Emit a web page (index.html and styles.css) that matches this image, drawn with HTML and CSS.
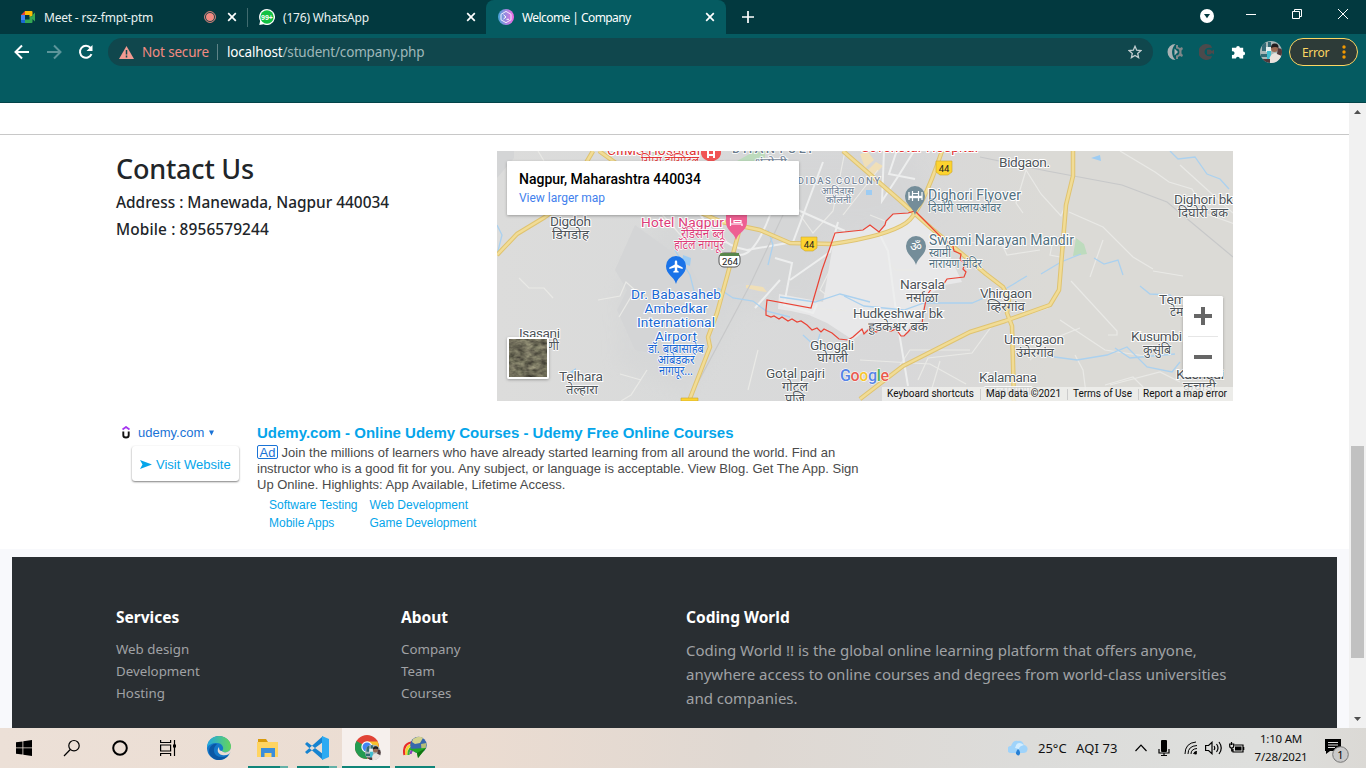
FILE: index.html
```html
<!DOCTYPE html>
<html lang="en">
<head>
<meta charset="utf-8">
<title>Welcome | Company</title>
<link rel="stylesheet" href="styles.css">
</head>
<body>
<div class="screen">
<header class="tabstrip">
  <div class="tab">
    <svg class="fav" viewBox="0 0 16 16"><path d="M1 6l4-4v4z" fill="#ea4335"/><path d="M5 2h6.500q1 0 1 1v4l-3 1V6H5z" fill="#fbbc04"/><path d="M1 6h4v5H1z" fill="#4285f4"/><path d="M1 11h4v3H2q-1 0-1-1z" fill="#1967d2"/><path d="M5 10.500h4.500V8l3-1v6q0 1-1 1H5zM12.500 6L15 3.500v9L12.500 10z" fill="#34a853"/></svg>
    <span class="tab-title">Meet - rsz-fmpt-ptm</span>
    <svg class="rec" viewBox="0 0 12 12"><circle cx="6" cy="6" r="5.400" fill="none" stroke="#e98a82"/><circle cx="6" cy="6" r="4" fill="#f28b82"/></svg>
    <svg class="x" viewBox="0 0 10 10"><path d="M1.200 1.200l7.600 7.600M8.800 1.200L1.200 8.800"/></svg>
  </div>
  <div class="tab sep">
    <svg class="fav" viewBox="0 0 16 16"><path d="M8 0a8 8 0 1 1-3.500 15.200L.3 16l.8-4A8 8 0 0 1 8 0z" fill="#fff"/><circle cx="8" cy="8" r="6.700" fill="#12c143"/><text x="8" y="10.500" class="badge99">99+</text></svg>
    <span class="tab-title">(176) WhatsApp</span>
    <svg class="x" viewBox="0 0 10 10"><path d="M1.200 1.200l7.600 7.600M8.800 1.200L1.200 8.800"/></svg>
  </div>
  <div class="tab active">
    <svg class="fav" viewBox="0 0 16 16"><defs><linearGradient id="fg"><stop stop-color="#47a4d8"/><stop offset="1" stop-color="#f36be4"/></linearGradient></defs><circle cx="8" cy="8" r="8" fill="url(#fg)"/><path d="M8 2.400l5 2.900v5.500l-5 2.900-5-2.900V5.300z" fill="none" stroke="#f3eaff"/><path d="M5.500 5.800L8 8l-2.500 2M8.500 10.300H11" fill="none" stroke="#fff"/></svg>
    <span class="tab-title tight">Welcome | Company</span>
    <svg class="x" viewBox="0 0 10 10"><path d="M1.200 1.200l7.600 7.600M8.800 1.200L1.200 8.800"/></svg>
  </div>
  <svg class="plus" viewBox="0 0 12 12"><path d="M6 0v12M0 6h12"/></svg>
  <div class="winbtns">
    <svg width="14" height="14" viewBox="0 0 14 14"><circle cx="7" cy="7" r="7" fill="#fff"/><path d="M4 5h6L7 9.300z" fill="#02393f"/></svg>
    <svg width="10" height="10" viewBox="0 0 10 10"><path d="M0 4.500h10"/></svg>
    <svg width="10" height="10" viewBox="0 0 10 10"><path d="M.5 2.500h7v7h-7zM2.500 2.500v-2h7v7h-2"/></svg>
    <svg width="10" height="10" viewBox="0 0 10 10"><path d="M0 0l10 10M10 0L0 10"/></svg>
  </div>
</header>
<div class="toolbar">
  <div class="addr-row">
    <svg class="nav" viewBox="0 0 16 16"><path d="M15 8H2M8 1.500L1.500 8 8 14.500"/></svg>
    <svg class="nav dim" viewBox="0 0 16 16"><path d="M1 8h13M8 1.500L14.500 8 8 14.500"/></svg>
    <svg class="nav" viewBox="0 0 16 16"><path d="M13.500 10.200A6 6 0 1 1 12.600 4"/><path d="M14.500 1v6H8.500z" fill="#fff" stroke="none"/></svg>
    <div class="omni">
      <svg class="warn" viewBox="0 0 15 13"><path d="M7.500 0L15 13H0z" fill="#f29a91"/><path d="M7.500 4v4.500M7.500 9.500v2" stroke="#10474d" stroke-width="1.500"/></svg>
      <span class="notsec">Not secure</span><i class="bar"></i>
      <span class="url"><b>localhost</b>/student/company.php</span>
      <svg class="star" viewBox="0 0 14 14"><path d="M7 1.300l1.700 3.900 4.100.4-3.100 2.800.9 4.200L7 10.400l-3.600 2.200.9-4.200L1.200 5.600l4.100-.4z" fill="none" stroke="#c3ced0" stroke-width="1.300"/></svg>
    </div>
    <svg class="ext" viewBox="0 0 16 16"><path d="M8.500 0A8 8 0 1 0 8.500 16C4 12 4 4 8.500 0z" fill="#a9b2b4"/><path d="M9 1h2v2l2 1 2-1 1 2-1.500 1.500v3L16 11l-1 2-2-1-2 1v2H9z" fill="#7e8789"/><circle cx="9" cy="8" r="3.400" fill="#075c62"/><path d="M7.500 4.500L11 8l-3.500 3.500z" fill="#aeb6b8"/></svg>
    <svg class="ext e2" viewBox="0 0 16 16"><path d="M12 1.500A8 8 0 1 0 12 14.500L13 12Q6 13 5.500 8 6 3 13 4z" fill="#4b4a4c"/><path d="M8 5.500h3l2 1.500 2-1.500v5L13 9l-2 1.500H8z" fill="#4b4a4c"/></svg>
    <svg class="ext e3" viewBox="0 0 16 16"><path d="M1 3.500h4.500a2 2 0 1 1 4 0H13v4a2 2 0 1 1 0 4V15H9.300a2 2 0 1 0-4 0H1v-4a2 2 0 1 0 0-3.700z" fill="#fff"/></svg>
    <svg class="face" viewBox="0 0 22 22"><use href="#portrait"/></svg>
    <div class="error"><span>Error</span><svg width="4" height="14" viewBox="0 0 4 14"><g fill="#f29900"><circle cx="2" cy="2" r="1.700"/><circle cx="2" cy="7" r="1.700"/><circle cx="2" cy="12" r="1.700"/></g></svg></div>
  </div>
</div>
<div class="viewport">
<main class="page">
  <div class="rule"></div>
  <section class="contact">
    <div class="info">
      <h2>Contact Us</h2>
      <p>Address : Manewada, Nagpur 440034</p>
      <p class="wider">Mobile : 8956579244</p>
    </div>
    <svg class="map" viewBox="497 151 736 250">
      <defs>
        <linearGradient id="mg"><stop stop-color="#dcdcdb"/><stop offset=".25" stop-color="#d9dada"/><stop offset=".55" stop-color="#d8d8d9"/><stop offset=".75" stop-color="#dbdad6"/></linearGradient>
        <filter id="sh" x="-20%" y="-20%" width="140%" height="160%"><feDropShadow dx="0" dy="1" stdDeviation="1.500" flood-opacity=".3"/></filter>
        <filter id="soft"><feGaussianBlur stdDeviation="9"/></filter>
        <filter id="grain" x="0" y="0" width="1" height="1" color-interpolation-filters="sRGB"><feTurbulence type="fractalNoise" baseFrequency=".12 .2" numOctaves="3" seed="5"/><feColorMatrix values=".5 .3 0 0 .03  .5 .28 0 0 .03  .4 .25 0 0 .02  0 0 0 0 1"/></filter>
      </defs>
      <rect x="497" y="151" width="736" height="250" fill="url(#mg)"/>
      <path d="M620 285l45-70 80-64h165l30 60-70 20-35 0-18 78-75-5-55 90-70-30z" fill="#cfd0d2" opacity=".3" filter="url(#soft)"/>
      <path d="M497 151h17v7l-17 20zM635 225l55 40 20 40-20 55-55-10-18-40 10-20-12-20z" fill="#d4d5d6"/>
      <path d="M650 151h20l-12 6zM737 161l18-10h10v10zM1076 238l8 6 3 10-14 2z" fill="#bddbbd"/>
      <path d="M1091 158l9-3 1 6zM866 190h6v5h-6zM683 255l8 3-1 8-8-3zM570 372l6-4-1 6z" fill="#9dccf3"/>
      <path d="M746 285l4 0 13 2 4 5-8-1-13-3zM860 154l8-2 6 8-9 8zM868 170l8-8 7 4-9 9z" fill="#f0dfb7"/>
      <path d="M835 233l28-3 7-5 9 7 14-18 22-1 25 23 15 31 7 15-17 3-20 12-4 23-10 5-8 12-8-11-24 0-18 14-26-17-18-8-18-4-13-2 1-15 44 8z" fill="#e8e8e9"/>
      <g class="small">
        <path d="M538 151l6 10M519 278l10 10h15l9 10M598 300l22-4 6-14 9 8-16 27M647 370l-16 25-10 6M620 374l21 6M758 350l-10 40M660 212l25 28M800 300l22 9 25 2M830 270l-10 20 13 10M843 215l35-45M800 215l13 18 20-22 12-60M860 360l70 4 36 20"/>
        <path d="M1026 170l-10 33 7 10M1026 170l15 24 20 22 8-20M1000 240l7 15 33-5M1069 212l34 15 30 30 20 12M1103 240l-13 37M1054 235l-4 20 10 2M1153 271l30 5M1071 281l46 50v4h-9M1030 360l20-20 30-12M1060 320l45 30 40 6M918 380l10-22 44-5 22-30 32-8 22-7M1120 151l35 21 14 10 23 7 15 25 28 10M1075 355l8 15 4 31M1105 385l28-8 10 10M1180 165l53 48M930 395l10-34"/>
        <path d="M870 215l50 20 70 10M886 260l10 10 20 0M900 365l10-15 60 0M1110 385l50-13 20 10"/>
      </g>
      <g class="white"><path d="M695 205q20 40 52 45l46-8 30-80M770 215q-15 40-30 40M775 258l17 5-8 42 29 8 4-9M880 235l8 16 10 75 10 60M884 151l-2 50 17-26 15-24M700 151l50 35 50 25 45 20M780 280l-25 28M838 222l-8 30-40 28M897 150l-8 24 26 5"/></g>
      <path class="rail" d="M783 215l-33 70-62 116M980 157l67 14 75 14 45 17 66 55"/>
      <g class="water"><path d="M497 225l5 10-5 20M718 288l15 10 20 3 13 10 24 6M780 297l35 5 25-8 30 8M844 296l20 10 40 4 20-7 48 0 35-15 20-12M675 250l15 25 5 20M768 230l5 15-5 20M1170 151l8 8 17-2 12 17 13 5 9 10M1041 274l20-12 20-8M1094 258l10 6 14-4 5 15M1140 286l10 8 20 1 10 10M1047 356l30 4 30-5 20-8 20 20 25 5 8-10M1115 348l15 10 45-4M803 335l13 12 4-13"/></g>
      <g class="casing"><path id="roadw" d="M497 255l20-21 28-17 18-12 10-20 20-34M599 151l63 45 60 26 38 8 30 13 42 1q55-8 74-21 15-10 36-72M742 220l-14 53-11 40-9 24 2 10-21 54M843 151l53 46 35 31 55 46 17 13 6 12-2 14 5 13 2 75M1073 151v25l-7 29-7 85-9 15-45 16-35 11-67 34-43 33"/></g>
      <use href="#roadw" class="road"/>
      <path class="bound" d="M822 270l13-37 28-3 7-5 9 7 6-7 1-4 7-7 15-1 7-2 25 25 13 10 1 5 7 3-1 6 5 3-2 6 3 3-2 5-17 2-4 6-8-1-8 11-4 20-1 10-8 0-6 7-4 4-3 0-5-7-5 2-8-2-7 3-7-3-5 5-2-5-9 8-5 3-9-1-7-6-8-4-3 3-4-4-5 2-5-5-6-4-4 1-5-3-4 2-6-4-3 2-5-3-3 1-5-2 0-5 1-10 44 8z"/>
      <g class="shield"><path d="M936 161h16v11l-4 3h-8l-4-3zM801 237h16v11l-4 3h-8l-4-3z"/><path d="M681 401v-3h17v3z"/></g>
      <rect x="719" y="253" width="21" height="14" rx="5" fill="#fff" stroke="#555"/><path d="M720 256v-3h19v3z" fill="#58864b"/>
      <g class="num"><text x="944" y="172">44</text><text x="809" y="248">44</text><text x="730" y="265">264</text></g>
      <g class="dark">
        <text x="999" y="167" textLength="51">Bidgaon.</text><text x="1174" y="204" textLength="59">Dighori bk</text><text class="hi" x="1178" y="217" textLength="50" lengthAdjust="spacingAndGlyphs">दिघोरी बक</text>
        <text x="550" y="226" textLength="41">Digdoh</text><text class="hi" x="552" y="239" textLength="37" lengthAdjust="spacingAndGlyphs">डिगडोह</text>
        <text x="519" y="338" textLength="41">Isasani</text><text class="hi" x="547" y="350">णी</text>
        <text x="559" y="381" textLength="44">Telhara</text><text class="hi" x="566" y="394" textLength="32" lengthAdjust="spacingAndGlyphs">तेल्हारा</text>
        <text x="900" y="289" textLength="45">Narsala</text><text class="hi" x="906" y="302" textLength="32" lengthAdjust="spacingAndGlyphs">नर्साळा</text>
        <text x="853" y="318" textLength="90">Hudkeshwar bk</text><text class="hi" x="868" y="331" textLength="60" lengthAdjust="spacingAndGlyphs">हुडकेश्वर बक</text>
        <text x="980" y="298" textLength="52">Vhirgaon</text><text class="hi" x="987" y="311" textLength="38" lengthAdjust="spacingAndGlyphs">व्हिरगांव</text>
        <text x="1004" y="344" textLength="60">Umergaon</text><text class="hi" x="1016" y="357" textLength="38" lengthAdjust="spacingAndGlyphs">उंमेरगांव</text>
        <text x="1159" y="304">Temsana</text><text class="hi" x="1170" y="316">टेमसना</text>
        <text x="1131" y="341" textLength="51">Kusumbi</text><text class="hi" x="1143" y="354" textLength="28" lengthAdjust="spacingAndGlyphs">कुसुंबि</text>
        <text x="810" y="350" textLength="44">Ghogali</text><text class="hi" x="817" y="362" textLength="31" lengthAdjust="spacingAndGlyphs">घोगली</text>
        <text x="766" y="378" textLength="59">Gotal pajri</text><text class="hi" x="782" y="391" textLength="26" lengthAdjust="spacingAndGlyphs">गोटल</text><text class="hi" x="785" y="403" textLength="20" lengthAdjust="spacingAndGlyphs">पजि</text>
        <text x="979" y="382" textLength="58">Kalamana</text><text class="hi" x="985" y="395" textLength="46" lengthAdjust="spacingAndGlyphs">काळामाणा</text>
        <text x="1176" y="379" textLength="48">Kachadi</text><text class="hi" x="1183" y="391" textLength="33" lengthAdjust="spacingAndGlyphs">कुचाडी</text>
      </g>
      <g class="blue"><text x="676" y="299" textLength="90">Dr. Babasaheb</text><text x="676" y="313" textLength="63">Ambedkar</text><text x="676" y="327" textLength="78">International</text><text x="676" y="341" textLength="42">Airport</text><text class="hi" x="676" y="353" textLength="56" lengthAdjust="spacingAndGlyphs">डॉ. बाबासाहेब</text><text class="hi" x="676" y="364" textLength="37" lengthAdjust="spacingAndGlyphs">आंबेडकर</text><text class="hi" x="676" y="375" textLength="34" lengthAdjust="spacingAndGlyphs">नागपूर...</text></g>
      <g class="pink"><text x="724" y="227" textLength="83">Hotel Nagpur</text><text class="hi" x="724" y="238" textLength="43" lengthAdjust="spacingAndGlyphs">रॅडिसन ब्लू</text><text class="hi" x="724" y="249" textLength="50" lengthAdjust="spacingAndGlyphs">हॉटेल नागपूर</text></g>
      <g class="red"><text x="607" y="155" textLength="93">CIIMS Hospital</text><text class="hi" x="641" y="165" textLength="58" lengthAdjust="spacingAndGlyphs">सिम्स हॉस्पिटल</text><text x="861" y="152" textLength="117">Sevenstar Hospital</text></g>
      <g class="slate"><text x="928" y="200" textLength="93">Dighori Flyover</text><text class="hi" x="928" y="212" textLength="73" lengthAdjust="spacingAndGlyphs">दिघोरी फ्लायओवर</text><text x="929" y="245" textLength="145">Swami Narayan Mandir</text><text class="hi" x="929" y="257" textLength="22" lengthAdjust="spacingAndGlyphs">स्वामी</text><text class="hi" x="929" y="268" textLength="53" lengthAdjust="spacingAndGlyphs">नारायण मंदिर</text></g>
      <g class="area"><text x="732" y="153" textLength="80" class="big">DHANTOLI</text><text x="755" y="165" textLength="32" class="hi" lengthAdjust="spacingAndGlyphs">धंतोली</text><text x="790" y="184" textLength="90">ADIDAS COLONY</text><text x="821" y="194" textLength="33" class="hi" lengthAdjust="spacingAndGlyphs">आदिदास</text><text x="826" y="203" textLength="25" class="hi" lengthAdjust="spacingAndGlyphs">कॉलनी</text></g>
      <path d="M676 284c-2-8-10-9-10-18a10 10 0 0 1 20 0c0 9-8 10-10 18z" fill="#1a73e8"/><path d="M676 260l1.200 1.500v3l5.500 3v1.500l-5.500-1.500v3l1.500 1v1h-5.400v-1l1.500-1v-3l-5.500 1.500v-1.500l5.500-3v-3z" fill="#fff"/>
      <path d="M736 240c-2-8-10-9-10-18v-7h21v7c0 9-9 10-11 18z" fill="#ee5f92"/><path d="M730.500 218v8M730.500 224h11.500v2M734 220.500h7v2h-7z" fill="none" stroke="#fff" stroke-width="1.200"/>
      <path d="M701 151h20q1 7-7 10h-6q-8-3-7-10z" fill="#f05454"/><path d="M708 151v7M714 151v7M708 155h6" stroke="#fff" stroke-width="2"/>
      <g fill="#748d99"><path d="M915 215c-2-8-10-10-10-19a10 10 0 0 1 20 0c0 9-8 11-10 19zM916 265c-2-8-10-10-10-19a10 10 0 0 1 20 0c0 9-8 11-10 19z"/></g>
      <path d="M909 197h13" stroke="#fff" stroke-width="2.400"/><path d="M912.500 191v10M918.500 191v10M909 192v8M922 192v8M912 193.500h7" fill="none" stroke="#fff" stroke-width="1.200"/><text x="916" y="251" class="om">ॐ</text>
      <g class="google"><text x="840" y="381" textLength="49"><tspan fill="#5684e6">G</tspan><tspan fill="#e95a50">o</tspan><tspan fill="#f7c52f">o</tspan><tspan fill="#5684e6">g</tspan><tspan fill="#4caf61">l</tspan><tspan fill="#e95a50">e</tspan></text></g>
      <rect x="507" y="161" width="292" height="54" rx="1" fill="#fff" filter="url(#sh)"/>
      <text class="place" x="519" y="184" textLength="182">Nagpur, Maharashtra 440034</text><text class="larger" x="519" y="202" textLength="86">View larger map</text>
      <rect x="507" y="337" width="42" height="42" rx="2" fill="#fff" filter="url(#sh)"/><rect x="509" y="339" width="38" height="38" filter="url(#grain)"/>
      <path d="M882 387h351v14H882z" fill="#f0f0ee" opacity=".8"/><path d="M980.500 389v11M1067.500 389v11M1138.500 389v11" stroke="#ccc"/>
      <g class="legal"><text x="887" y="397" textLength="87">Keyboard shortcuts</text><text x="986" y="397" textLength="75">Map data ©2021</text><text x="1073" y="397" textLength="59">Terms of Use</text><text x="1143" y="397" textLength="84">Report a map error</text></g>
      <rect x="1183" y="296" width="40" height="81" rx="1.500" fill="#fff" filter="url(#sh)"/><path d="M1188 336.500h30" stroke="#e6e6e6"/><path d="M1194 316h18M1203 307v18M1194 357h18" stroke="#666" stroke-width="4"/>
    </svg>
  </section>
  <section class="advert">
    <div class="brand">
      <div class="domain"><svg width="8" height="13" viewBox="0 0 8 13"><path d="M.5 3.500L4 1l3.500 2.500" fill="none" stroke="#a435f0" stroke-width="1.800"/><path d="M1.300 5.500v3.700q0 2.300 2.700 2.300t2.700-2.300V5.500" fill="none" stroke="#111" stroke-width="1.900"/></svg><span>udemy.com</span><svg width="5" height="6" viewBox="0 0 6 6"><path d="M0 0h6L3 6z" fill="#1a73d6"/></svg></div>
      <div class="visit"><svg width="12" height="9" viewBox="0 0 12 9"><path d="M0 0l12 4.500L0 9l2.500-4.500z" fill="#05a5ea"/></svg><span>Visit Website</span></div>
    </div>
    <div class="copy">
      <h3>Udemy.com - Online Udemy Courses - Udemy Free Online Courses</h3>
      <p><span class="ad">Ad</span> Join the millions of learners who have already started learning from all around the world. Find an<br>instructor who is a good fit for you. Any subject, or language is acceptable. View Blog. Get The App. Sign<br>Up Online. Highlights: App Available, Lifetime Access.</p>
      <div class="links"><span>Software Testing</span><span>Web Development</span><span>Mobile Apps</span><span>Game Development</span></div>
    </div>
  </section>
  <footer class="foot">
    <div><h4>Services</h4><p>Web design</p><p>Development</p><p>Hosting</p></div>
    <div><h4>About</h4><p>Company</p><p>Team</p><p>Courses</p></div>
    <div class="wide"><h4>Coding World</h4><p>Coding World !! is the global online learning platform that offers anyone,<br>anywhere access to online courses and degrees from world-class universities<br>and companies.</p></div>
  </footer>
</main>
<div class="scroll"><svg width="7" height="4" viewBox="0 0 7 4"><path d="M0 4l3.500-4L7 4z" fill="#505050"/></svg><i class="thumb"></i><svg width="7" height="4" viewBox="0 0 7 4"><path d="M0 0l3.500 4L7 0z" fill="#505050"/></svg></div>
</div>
<div class="taskbar">
  <div class="app"><svg width="16" height="16" viewBox="0 0 16 16"><path d="M0 2.300L6.500 1.400v6.100H0zM7.300 1.200L16 0v7.500H7.300zM0 8.300h6.500v6.300L0 13.700zM7.300 8.300H16V16l-8.700-1.200z"/></svg></div>
  <div class="app"><svg width="18" height="18" viewBox="0 0 18 18"><circle cx="11" cy="6.700" r="5.200" class="line"/><path d="M7.300 10.500L1 17" class="line"/></svg></div>
  <div class="app"><svg width="16" height="16" viewBox="0 0 16 16"><circle cx="8" cy="8" r="6.800" fill="none" stroke="#000" stroke-width="2"/></svg></div>
  <div class="app"><svg width="16" height="16" viewBox="0 0 16 16"><path d="M.6 0v2.500h10V0M.6 16v-2.500h10V16M.6 5h10v6H.6zM14.500 0v16" class="line"/><path d="M13 4.500h3v3h-3z"/></svg></div>
  <div class="app gap"><svg width="24" height="24" viewBox="0 0 24 24"><defs><linearGradient id="eg"><stop stop-color="#21a7e3"/><stop offset="1" stop-color="#65d65a"/></linearGradient></defs><circle cx="12" cy="12" r="12" fill="#1478c9"/><path d="M0 12C0 5 5 0 12 0s12 5 12 11c0 5-7 7-9 4 3-3 0-8-5-8-5 0-9 2-10 5z" fill="url(#eg)"/><path d="M10 8c-6 5-3 14 6 13 4 0 6-3 6-3-3 6-9 6-12 6C2 22 0 14 4 10q3-3 6-2z" fill="#0b57a4"/><path d="M15 15c2 3 9 1 9-4l0 5q-3 4-9 3c-5-1-5-6-3-8 0 3 1 4 3 4z" fill="#e9ddd4"/></svg></div>
  <div class="app run"><svg width="22" height="20" viewBox="0 0 22 20"><path d="M1 1h8l2 3H1z" fill="#d99a0b"/><path d="M0 4h21v15H0z" fill="#ffd461"/><path d="M4 19v-9h14v9h-3.500v-4h-7v4z" fill="#3b8edb"/></svg></div>
  <div class="app run"><svg width="24" height="24" viewBox="0 0 24 24"><path d="M0 8l2-2 16 12v6L2 10zM0 16l2 2L18 6V0L0 16z" fill="#1683d0"/><path d="M17 0l7 3v18l-7 3z" fill="#2caaf2"/></svg></div>
  <div class="app current"><svg width="26" height="26" viewBox="0 0 26 26"><circle cx="12" cy="12" r="12" fill="#e14336"/><path d="M12 12L1.500 6A12 12 0 0 0 12 24l5-9z" fill="#249b51"/><path d="M12 12l0-5.500h10.500A12 12 0 0 1 12 24l5-9z" fill="#f9c22b"/><circle cx="12" cy="12" r="5.700" fill="#fff"/><circle cx="12" cy="12" r="4.500" fill="#4285f4"/><g transform="translate(10 9.500) scale(.72)"><g id="portrait"><clipPath id="pc"><circle cx="11" cy="11" r="11"/></clipPath><g clip-path="url(#pc)"><path d="M0 0h22v22H0z" fill="#a9b8b8"/><path d="M2 2h4v8H2zM8 1h3v5H8zM1 13h6v3H1z" fill="#336b76"/><path d="M6 6h5v5H6z" fill="#e4f0f0"/><path d="M7 10h4v12H7z" fill="#3fbdcf"/><path d="M9 22q0-9 6-10 6 1 7 6v4z" fill="#e9e2dd"/><circle cx="14.500" cy="7.500" r="3.500" fill="#9b6a52"/><path d="M11 7q0-5 4-4.500 4 0 3.500 4.500-3-2-7.500 0z" fill="#221d1d"/><path d="M0 18h10v4H0zM17 13l5 2v-7l-4-1z" fill="#50383a"/></g></g></g></svg></div>
  <div class="app run solid"><svg width="24" height="24" viewBox="0 0 24 24"><g fill="none" stroke-width="2.200"><path d="M1.500 19Q-1 7 11 6" stroke="#e82c29"/><path d="M3.500 19Q2 9 12 8" stroke="#f4d528"/><path d="M5.500 19Q5 11 13 10" stroke="#36ae3a"/><path d="M7.500 18Q8 13 14 12" stroke="#8b3fbd"/></g><circle cx="15.500" cy="9" r="8.300" fill="#3767ad"/><path d="M10 3q6-4 10-1l-3 5-5 1-3-2z" fill="#d3d28e"/><path d="M18 8l5.500-1-1 6-4 1z" fill="#b5bd78"/><path d="M6 13l17-1-8 10-1-5z" fill="#20a724"/><path d="M14 17l9-5-8 10z" fill="#117512"/></svg></div>
  <div class="tray">
    <svg width="20" height="16" viewBox="0 0 20 16"><path d="M3 13a3.500 3.500 0 0 1 0-7q2-6 7-5 4-1 6 4 4 1 3.500 4.500T15 13z" fill="#9fd3fa"/><path d="M7 8q2-8 9-3-5 1-5 4z" fill="#d2edff"/><path d="M10 9q-2.500 3-2 4.500T10 15.500t2-2T10 9z" fill="#267fd4"/></svg>
    <span class="temp">25°C</span><span class="aqi">AQI 73</span>
    <svg width="12" height="8" viewBox="0 0 12 8"><path d="M.5 7L6 1.200 11.500 7" class="line"/></svg>
    <svg class="mic" width="12" height="16" viewBox="0 0 12 16"><rect x="3" width="6" height="12" rx="1"/><path d="M1 9v4h10V9M6 13v3M3 15.500h6" class="line"/></svg>
    <svg class="wifi" width="14" height="14" viewBox="0 0 14 14"><path d="M1 13Q1 2 12 1M4 13Q4 5 13 4.500M7 13Q7 8 13 7.500M9.500 13Q10 10.500 13 10.500" class="line thin"/><circle cx="11.500" cy="12" r="1.500"/></svg>
    <svg class="vol" width="17" height="14" viewBox="0 0 17 14"><path d="M.6 4.500h3L7 1.300v11.400L3.600 9.500h-3zM9 5q1.500 2 0 4M11.500 3q3 4 0 8M14 1q4.500 6 0 12" class="line"/></svg>
    <svg class="bat" width="16" height="12" viewBox="0 0 16 12"><path d="M5.500 3H14v7H4V7M14.700 5v3M2.500 0v3M.7 2h4v2q0 2-2 2t-2-2zM2.700 6v3H4" class="line"/><path d="M6 4.500h6.500v4H6z"/></svg>
    <div class="clock"><span>1:10 AM</span><span>7/28/2021</span></div>
    <svg class="note" width="26" height="26" viewBox="0 0 26 26"><path d="M0 2h16v12H5l-4 3v-3H0z"/><path d="M3 5.500h10M3 8h10M3 10.500h7" stroke="#ddd"/><circle cx="15.500" cy="17.500" r="7.800" fill="#c9c9c9" stroke="#777"/><text x="15.500" y="21.500">1</text></svg>
  </div>
</div>
</div>
</body>
</html>
```
FILE: styles.css
```css
* { box-sizing: border-box; }
body { margin: 0; overflow: hidden; font-family: "Noto Sans", "Open Sans", sans-serif; }
svg { display: block; flex: none; }
span { white-space: nowrap; }
h2, h3, h4, p { margin: 0; white-space: nowrap; }
.screen { width: 1366px; height: 768px; display: flex; flex-direction: column; overflow: hidden; }

.tabstrip { height: 34px; flex: none; background: #02393f; display: flex; padding-left: 8px; }
.tab { width: 239px; display: flex; align-items: center; padding: 0 10px 0 12px; color: #e9f2f2; font-size: 12px; letter-spacing: -.2px; }
.tab.sep { background: linear-gradient(#406b6f, #406b6f) 0 8px / 1px 19px no-repeat; }
.tab.active { width: 240px; background: #055b61; border-radius: 8px 8px 0 0; color: #fff; padding-right: 11px; }
.tight { letter-spacing: -.57px; }
.fav { width: 16px; height: 16px; margin-right: 8px; }
.badge99 { font: bold 7px "Liberation Sans", sans-serif; letter-spacing: 0; fill: #fff; text-anchor: middle; }
.x { width: 10px; height: 10px; margin-left: auto; }
.x path, .plus path { stroke: #fff; stroke-width: 1.700; fill: none; }
.rec { width: 12px; height: 12px; margin-left: auto; margin-right: 11px; }
.rec + .x { margin-left: 0; }
.plus { width: 12px; height: 12px; margin: 11px 0 0 16px; }
.winbtns { margin-left: auto; display: flex; align-items: flex-start; padding: 9px 18px 0 0; }
.winbtns svg:not(:first-child) { stroke: #fff; fill: none; }
.winbtns svg:nth-child(2) { margin: 1px 36px 0 32px; }
.winbtns svg:nth-child(3) { margin-right: 36px; }

.toolbar { height: 69px; flex: none; background: #055b61; border-bottom: 1px solid #034449; }
.addr-row { display: flex; align-items: center; height: 36px; padding-left: 14px; }
.nav { width: 16px; height: 16px; margin-right: 16px; fill: none; stroke: #fff; stroke-width: 2; }
.nav.dim { stroke: #5d959a; }
.nav:nth-of-type(3) { margin-right: 14px; }
.omni { width: 1045px; height: 28px; border-radius: 14px; background: #10474d; display: flex; align-items: center; padding: 0 11px; font-size: 13.500px; letter-spacing: -.17px; color: #9fb7b9; }
.warn { width: 15px; height: 13px; margin-right: 8px; }
.notsec { color: #f28b82; width: 75px; }
.bar { width: 1px; height: 16px; background: #5f8387; margin-right: 9px; }
.url b { color: #fff; font-weight: 400; }
.star { width: 14px; height: 14px; margin-left: auto; }
.ext { width: 16px; height: 16px; margin-left: 14px; }
.ext.e2 { margin-left: 16px; }
.ext.e3 { margin-left: 16px; width: 15px; }
.face { width: 22px; height: 22px; margin-left: 14px; }
.error { margin-left: 7px; width: 69px; height: 28px; border: 1px solid #fdd663; border-radius: 14px; background: #2d3b38; color: #fdd663; font-size: 12px; letter-spacing: -.3px; display: flex; align-items: center; justify-content: space-between; padding: 0 11px 0 12px; }

.viewport { height: 625px; flex: none; display: flex; background: #f8f9fc; }
.page { width: 1349px; display: flex; flex-direction: column; background: linear-gradient(#fff 446px, #f8f9fc 446px); }
.rule { height: 32px; border-bottom: 1px solid #c8c8c8; }
.contact { display: flex; padding: 16px 0 0 116px; height: 288px; color: #212529; }
.info { width: 381px; font-weight: 500; padding-top: 1px; }
.info h2 { font-weight: 500; font-size: 27px; letter-spacing: -.2px; line-height: 34px; margin-bottom: 5px; }
.info p { font-size: 15.400px; line-height: 24px; margin-bottom: 3px; }
.info .wider { letter-spacing: .13px; }
.map { width: 736px; height: 250px; font-family: Roboto, "Noto Sans", sans-serif; font-size: 13.700px; }
.map text { paint-order: stroke; }
.map .hi { font-size: 12px; font-family: "Noto Sans Devanagari", "Noto Sans", sans-serif; stroke-width: 1.300px; }
.small path { fill: none; stroke: #e9e9e6; stroke-width: 1.200; }
.white path { fill: none; stroke: #edeeee; stroke-width: 2; }
.rail { fill: none; stroke: #c7c8c9; stroke-width: 1.200; }
.water path { fill: none; stroke: #abd1ef; stroke-width: 1.300; }
.casing { fill: none; stroke: #dfc370; stroke-width: 4.500; stroke-linejoin: round; }
.road { fill: none; stroke: #f1dc96; stroke-width: 2.500; }
.bound { fill: none; stroke: #ea4335; stroke-width: 1.200; }
.shield { fill: #fdd32f; stroke: #c9a52f; stroke-width: .6; }
.num { font-size: 9.500px; fill: #222; text-anchor: middle; }
.dark { fill: #4e5459; stroke: #fff; stroke-width: 2px; }
.blue { fill: #1967d2; stroke: #fff; stroke-width: 2px; text-anchor: middle; }
.pink { fill: #dc3c78; stroke: #fff; stroke-width: 2px; text-anchor: end; }
.red { fill: #e03535; stroke: #fff; stroke-width: 2px; }
.slate { fill: #527080; stroke: #fff; stroke-width: 2px; font-size: 14px; }
.area { fill: #77879a; stroke: #fff; stroke-width: 1.500px; font-size: 9.500px; font-weight: 500; }
.area .hi { font-size: 10px; }
.area .big { font-size: 13px; fill: #6b7c8d; }
.om { fill: #fff; font-size: 13px; text-anchor: middle; }
.google { font: 500 16px Roboto, sans-serif; stroke: #fff; stroke-width: 1px; }
.place { font-size: 14px; font-weight: 500; fill: #000; }
.larger { font-size: 12px; fill: #427fed; }
.legal { font-size: 10px; fill: #111; }

.advert { display: flex; height: 134px; padding-left: 116px; font-family: "Liberation Sans", Arial, sans-serif; }
.brand { width: 141px; }
.domain { display: flex; align-items: center; padding: 1px 0 0 6px; height: 18px; color: #1a73d6; font-size: 13px; }
.domain svg:first-child { margin-right: 8px; }
.domain svg:last-child { margin-left: 5px; }
.visit { width: 107px; height: 35px; margin: 5px 0 0 16px; border-radius: 3px; box-shadow: 0 1px 2px rgba(0, 0, 0, .5); display: flex; align-items: center; gap: 4px; padding: 1px 0 0 8px; font-size: 13px; color: #05a5ea; }
.copy h3 { font-size: 15px; line-height: 20px; color: #05a5ea; margin-bottom: 2px; }
.copy p { font-size: 13px; line-height: 16px; color: #4a4a4a; }
.ad { display: inline-block; height: 14px; line-height: 13px; width: 21px; text-align: center; border: 1px solid #1a73d6; border-radius: 2px; color: #1a73d6; }
.links { display: grid; grid-template-columns: 100.500px auto; grid-auto-rows: 18px; justify-content: start; align-items: center; padding: 3px 0 0 12px; font-size: 12px; color: #05a5ea; }
.foot { margin: 0 12px; height: 171px; background: #292e32; display: grid; grid-template-columns: 285px 285px 1fr; padding: 48px 0 0 104px; color: #a0a2a5; }
.foot h4 { font-size: 15.500px; line-height: 24px; font-weight: 700; color: #fff; margin-bottom: 9px; }
.foot p { font-size: 13.300px; line-height: 22px; }
.foot .wide p { font-size: 15px; line-height: 24px; }
.scroll { width: 17px; background: #f1f1f1; display: flex; flex-direction: column; align-items: center; padding: 7px 0; }
.thumb { width: 13px; height: 212px; background: #c1c1c1; margin: 332px 0 auto; }

.taskbar { height: 40px; flex: none; display: flex; background: linear-gradient(90deg, #ece0d7, #ebdcd1 35%, #dfd8d2 55%, #dcdcda 75%, #dedfdd 92%, #dbd9d5); color: #111; }
.app { width: 48px; height: 40px; display: flex; align-items: center; justify-content: center; }
.app.gap { width: 53px; padding: 0 0 0 1px; }
.app.run { background: linear-gradient(90deg, #108579 80%, #63b1a7 80%) 3px 38px / 40px 2px no-repeat; width: 49px; padding-right: 3px; }
.app.current { width: 48px; margin-left: -1px; padding-left: 3px; background: linear-gradient(#f6f0ed 38px, #108579 38px); }
.app.solid { background: linear-gradient(#108579, #108579) 5px 38px / 40px 2px no-repeat; padding-right: 0; }
.line { fill: none; stroke: #000; stroke-width: 1.200; }
.line.thin { stroke-width: 1; }
.tray { margin-left: auto; width: 358px; display: flex; align-items: center; font-size: 13px; }
.temp { margin-left: 10px; width: 38px; }
.aqi { width: 59px; letter-spacing: .1px; }
.mic { margin-left: 11px; }
.wifi { margin-left: 14px; }
.vol { margin-left: 7px; }
.bat { margin-left: 7px; }
.clock { width: 72px; display: flex; flex-direction: column; align-items: center; font-size: 11.500px; letter-spacing: -.2px; line-height: 18px; margin-left: 0; }
.note { margin: 3px 0 0 8px; }
.note text { font-size: 11px; text-anchor: middle; }
```
